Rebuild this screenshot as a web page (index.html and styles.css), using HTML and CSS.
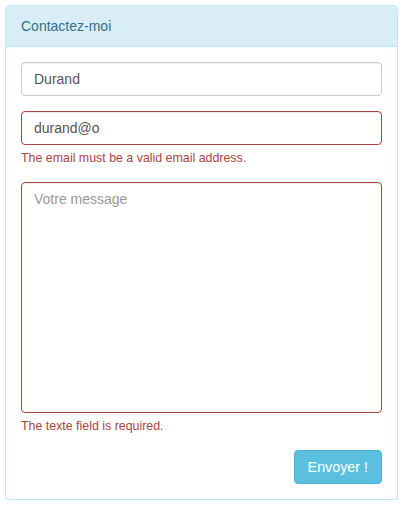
FILE: index.html
```html
<!DOCTYPE html>
<html lang="fr">
<head>
<meta charset="utf-8">
<title>Contactez-moi</title>
<link rel="stylesheet" href="styles.css">
</head>
<body>
<div class="panel">
  <div class="panel-heading">Contactez-moi</div>
  <div class="panel-body">
    <form class="form">
      <div class="form-group">
        <input class="form-control" type="text" value="Durand">
      </div>
      <div class="form-group has-error">
        <input class="form-control" type="text" value="durand@o">
        <span class="help-block">The email must be a valid email address.</span>
      </div>
      <div class="form-group has-error">
        <textarea class="form-control textarea" placeholder="Votre message"></textarea>
        <span class="help-block">The texte field is required.</span>
      </div>
      <div class="actions">
        <button type="button" class="btn">Envoyer !</button>
      </div>
    </form>
  </div>
</div>
</body>
</html>
```

FILE: styles.css
```css
* { box-sizing: border-box; }
html, body { background: #fff; }
body {
  margin: 5px 4px 5px 5px;
  font-family: "Liberation Sans", Arial, sans-serif;
  font-size: 14px;
  line-height: 1.42857143;
  color: #333;
}
.panel {
  width: 393px;
  border: 1px solid #bce8f1;
  border-radius: 4px;
  background: #fff;
  box-shadow: 0 1px 1px rgba(0,0,0,.05);
}
.panel-heading {
  padding: 10px 15px;
  background: #d9edf7;
  color: #31708f;
  border-bottom: 1px solid #bce8f1;
  border-radius: 3px 3px 0 0;
  font-size: 14px;
  line-height: 20px;
}
.panel-body { padding: 15px; }
.form { margin: 0; }
.form-group { margin-bottom: 15px; }
.form-control {
  display: block;
  width: 100%;
  height: 34px;
  padding: 6px 12px;
  font-family: inherit;
  font-size: 14px;
  line-height: 1.42857143;
  color: #555;
  background: #fff;
  border: 1px solid #ccc;
  border-radius: 4px;
  box-shadow: inset 0 1px 1px rgba(0,0,0,.075);
  margin: 0;
}
.textarea {
  height: 231px;
  resize: none;
}
.textarea::placeholder { color: #999; opacity: 1; }
.has-error .form-control {
  border-color: #a94442;
}
.help-block {
  display: block;
  margin-top: 5px;
  margin-bottom: 10px;
  font-size: 12.4px;
  line-height: 17px;
  color: #a94442;
}
.actions {
  display: flex;
  justify-content: flex-end;
}
.btn {
  height: 34px;
  padding: 6px 13px;
  font-family: inherit;
  font-size: 14.3px;
  line-height: 20px;
  color: #fff;
  background: #5bc0de;
  border: 1px solid #46b8da;
  border-radius: 4px;
  cursor: pointer;
}
```
